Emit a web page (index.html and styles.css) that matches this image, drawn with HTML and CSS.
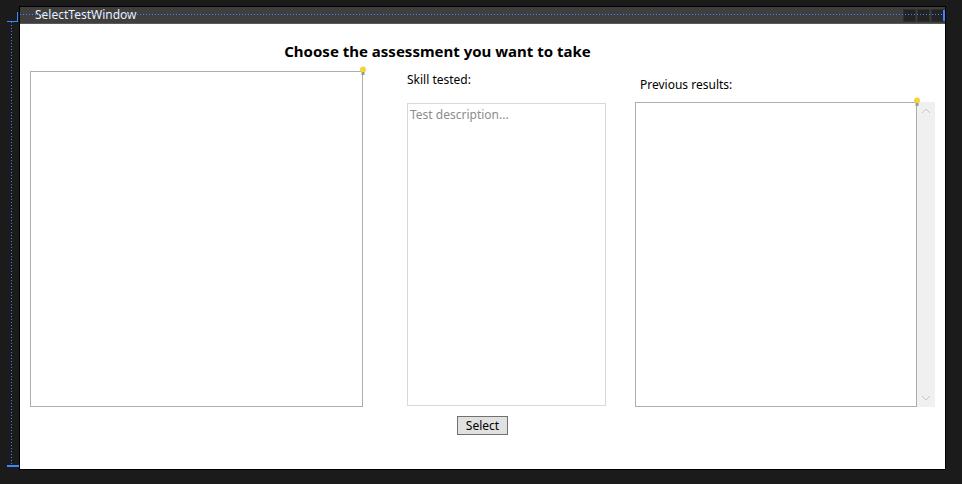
FILE: index.html
```html
<!DOCTYPE html>
<html>
<head>
<meta charset="utf-8">
<title>SelectTestWindow</title>
<link rel="stylesheet" href="styles.css">
</head>
<body>
<div class="stage">
  <div class="window">
    <div class="titlebar">
      <span class="title">SelectTestWindow</span>
      <div class="caption-buttons">
        <span class="cap"></span><span class="cap"></span><span class="cap"></span>
      </div>
    </div>
    <div class="content">
      <h1 class="heading">Choose the assessment you want to take</h1>
      <div class="row">
        <div class="listbox tests">
          <svg class="bulb" width="8" height="10" viewBox="0 0 8 10"><circle cx="4" cy="3.5" r="3" fill="#f6d23a"/><rect x="2.5" y="6" width="3" height="3" fill="#9a9a9a"/></svg>
        </div>
        <div class="col skill">
          <div class="label">Skill tested:</div>
          <div class="textbox"><span class="placeholder">Test description...</span></div>
        </div>
        <div class="col results">
          <div class="label">Previous results:</div>
          <div class="results-box">
            <div class="listbox prev">
              <svg class="bulb" width="8" height="10" viewBox="0 0 8 10"><circle cx="4" cy="3.5" r="3" fill="#f6d23a"/><rect x="2.5" y="6" width="3" height="3" fill="#9a9a9a"/></svg>
            </div>
            <div class="scrollbar">
              <svg width="10" height="6" viewBox="0 0 10 6"><path d="M1 5 L5 1 L9 5" fill="none" stroke="#c8c8c8" stroke-width="1"/></svg>
              <svg width="10" height="6" viewBox="0 0 10 6"><path d="M1 1 L5 5 L9 1" fill="none" stroke="#c8c8c8" stroke-width="1"/></svg>
            </div>
          </div>
        </div>
      </div>
      <div class="actions"><button class="select-btn">Select</button></div>
    </div>
  </div>
  <div class="guide guide-top"></div>
  <div class="guide-top-end"></div>
  <div class="guide guide-left"></div>
  <div class="guide-corner-h"></div>
  <div class="guide-corner-v"></div>
  <div class="guide-bottom"></div>
</div>
</body>
</html>
```
FILE: styles.css
```css
html, body {
  margin: 0;
  padding: 0;
  background: #1b1b1b;
}
.stage {
  position: relative;
  width: 962px;
  height: 484px;
  overflow: hidden;
  font-family: "Noto Sans", "Open Sans", sans-serif;
  font-size: 12px;
}
.window {
  position: absolute;
  left: 19px;
  top: 6px;
  width: 925px;
  height: 462px;
  border: 1px solid #000;
  display: flex;
  flex-direction: column;
  background: #fff;
}
.titlebar {
  height: 16px;
  background: #3f3f3f;
  border-bottom: 1px solid #5a5a5a;
  display: flex;
  align-items: center;
  justify-content: space-between;
}
.title {
  color: #f2f2f2;
  margin-left: 15px;
  font-size: 12px;
  line-height: 16px;
}
.caption-buttons {
  display: flex;
  gap: 1px;
  margin-right: 1px;
}
.cap {
  width: 13px;
  height: 13px;
  background: #232323;
  border: 1px solid #2f2f2f;
  box-sizing: border-box;
}
.content {
  flex: 1;
  display: flex;
  flex-direction: column;
  background: #fff;
}
.heading {
  margin: 17px 0 0 0;
  padding-right: 90px;
  text-align: center;
  font-size: 15px;
  line-height: 20px;
  font-weight: bold;
  color: #000;
}
.row {
  display: flex;
  align-items: flex-start;
  margin-top: 10px;
}
.listbox {
  position: relative;
  border: 1px solid #abadb3;
  background: #fff;
  box-sizing: border-box;
}
.tests {
  margin-left: 10px;
  width: 333px;
  height: 336px;
}
.bulb {
  position: absolute;
  right: -5px;
  top: -6px;
}
.col {
  display: flex;
  flex-direction: column;
}
.label {
  color: #000;
  font-size: 12px;
  line-height: 16px;
}
.skill {
  margin-left: 44px;
  padding-top: 1px;
}
.textbox {
  margin-top: 15px;
  width: 199px;
  height: 303px;
  box-sizing: border-box;
  border: 1px solid #d9d9d9;
  padding: 2px 2px;
}
.placeholder {
  color: #8d8d8d;
  font-size: 12px;
  line-height: 16px;
}
.results {
  margin-left: 29px;
  padding-top: 6px;
}
.results .label {
  margin-left: 5px;
}
.results-box {
  margin-top: 9px;
  display: flex;
}
.prev {
  width: 282px;
  height: 305px;
}
.scrollbar {
  width: 18px;
  height: 305px;
  background: #f0f0f0;
  display: flex;
  flex-direction: column;
  align-items: center;
  justify-content: space-between;
  padding: 6px 0;
  box-sizing: border-box;
}
.actions {
  display: flex;
  justify-content: center;
  margin-top: 9px;
}
.select-btn {
  width: 51px;
  height: 19px;
  padding: 0;
  background: #e1e1e1;
  border: 1px solid #707070;
  font-family: "Noto Sans", "Open Sans", sans-serif;
  font-size: 12px;
  line-height: 15px;
  color: #000;
}
.guide {
  position: absolute;
}
.guide-top {
  left: 20px;
  top: 14px;
  width: 924px;
  height: 1px;
  background-image: linear-gradient(to right, #3d86ff 50%, transparent 50%);
  background-size: 3px 1px;
}
.guide-top-end {
  position: absolute;
  left: 943px;
  top: 10px;
  width: 2px;
  height: 11px;
  background: #3d86ff;
}
.guide-left {
  left: 11px;
  top: 22px;
  width: 1px;
  height: 443px;
  background-image: linear-gradient(to bottom, #3d86ff 50%, transparent 50%);
  background-size: 1px 3px;
}
.guide-corner-h {
  position: absolute;
  left: 7px;
  top: 21px;
  width: 11px;
  height: 1px;
  background: #3d86ff;
}
.guide-corner-v {
  position: absolute;
  left: 17px;
  top: 12px;
  width: 1px;
  height: 9px;
  background: #3d86ff;
}
.guide-bottom {
  position: absolute;
  left: 7px;
  top: 465px;
  width: 12px;
  height: 2px;
  background: #3d86ff;
}
```
